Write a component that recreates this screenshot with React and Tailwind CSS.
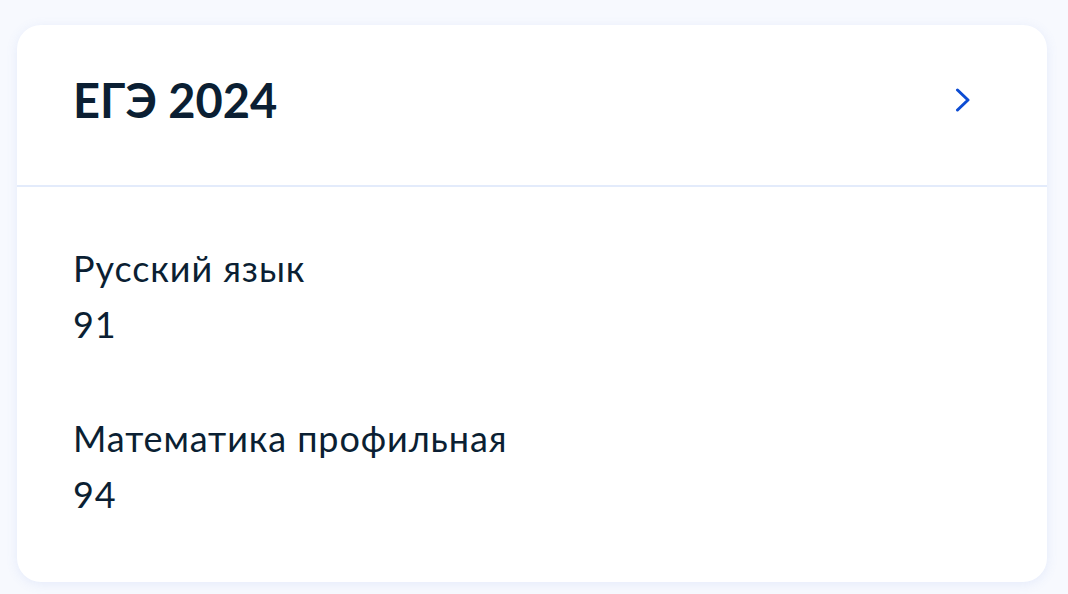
export default function App() {
  return (
    <div className="w-[1068px] h-[594px] bg-[#f7f9fe] pt-[25px] pl-[17px]" style={{ fontFamily: 'Lato, "Noto Sans", sans-serif' }}>
      <div className="w-[1030px] h-[557px] bg-white rounded-[24px] shadow-[0_2px_12px_rgba(100,130,220,0.12)] text-[#0b1f33]">
        <div className="h-[162px] flex items-start justify-between pt-[52px] pl-[56px] pr-[76px] border-b-2 border-[#e3ebfb]">
          <div className="text-[47px] font-bold leading-none">ЕГЭ 2024</div>
          <svg className="mt-[11px]" width="16" height="24" viewBox="0 0 16 24" fill="none">
            <path d="M2.5 2 L13 12 L2.5 22" stroke="#0d4cd3" strokeWidth="3" strokeLinecap="round" strokeLinejoin="round" />
          </svg>
        </div>
        <div className="pl-[56px] pt-[53px] flex flex-col gap-[58px] text-[36px] leading-[56px] tracking-[0.9px]">
          <div>
            <div>Русский язык</div>
            <div>91</div>
          </div>
          <div>
            <div>Математика профильная</div>
            <div>94</div>
          </div>
        </div>
      </div>
    </div>
  );
}
